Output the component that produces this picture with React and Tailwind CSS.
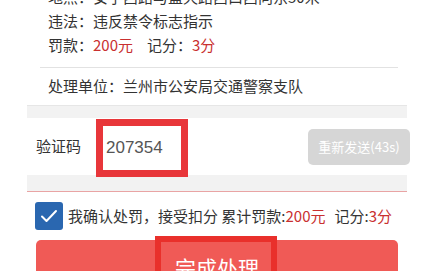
export default function App() {
  return (
    <div
      className="w-[424px] h-[271px] overflow-hidden bg-white text-[#333]"
      style={{ fontFamily: '"Noto Sans CJK SC", "Noto Sans", sans-serif' }}
    >
      {/* 违章信息 */}
      <div className="-mt-[15px] pl-[48px] text-[15px] leading-[24px]">
        <div>地点：安宁西路与蓝天路西口西向东50米</div>
        <div>违法：违反禁令标志指示</div>
        <div>
          罚款：<span className="text-[#c93030]">200元</span>
          <span className="ml-[14px]">记分：</span>
          <span className="text-[#c93030]">3分</span>
        </div>
      </div>
      <div className="mt-[10px] mx-[40px] mr-[26px] h-px bg-[#e2e2e2]" />

      <div className="h-[37px] pl-[48px] flex items-center text-[15px]">
        处理单位：兰州市公安局交通警察支队
      </div>
      <div className="mx-[27px] mr-[17px] h-[13px] bg-[#f2f2f2] border-t border-[#e6e6e6]" />

      {/* 验证码 */}
      <div className="h-[57px] mx-[27px] mr-[17px] flex items-center relative z-10">
        <span className="ml-[9px] w-[60px] text-[15px]">验证码</span>
        <div className="h-[58px] w-[92px] mt-[3px] border-[7px] border-[#e8363a] flex items-center pl-[3px]">
          <span
            className="text-[17px] text-[#555]"
            style={{ fontFamily: '"Liberation Sans", sans-serif' }}
          >
            207354
          </span>
        </div>
        <div className="ml-auto mr-[-3px] w-[102px] h-[36px] rounded-[5px] bg-[#d6d6d6] text-white text-[13px] flex items-center justify-center">
          重新发送(43s)
        </div>
      </div>
      <div className="mx-[27px] mr-[17px] h-[17px] bg-[#f2f2f2] border-b border-[#e9a4a4]" />

      {/* 确认 */}
      <div className="h-[48px] pl-[35px] flex items-center text-[15px]">
        <div className="w-[28px] h-[28px] rounded-[3px] bg-[#2a67b0] flex items-center justify-center">
          <svg width="18" height="14" viewBox="0 0 18 14" fill="none">
            <path d="M2 7.5 L6.5 12 L16 2" stroke="white" strokeWidth="2" strokeLinecap="round" strokeLinejoin="round" />
          </svg>
        </div>
        <span className="ml-[5px]">
          我确认处罚，接受扣分 累计罚款:<span className="text-[#c93030]">200元</span>
          <span className="ml-[9px]">记分:</span>
          <span className="text-[#c93030]">3分</span>
        </span>
      </div>

      {/* 完成处理 */}
      <div className="relative mx-[36px] mr-[26px] h-[54px] rounded-[5px] bg-[#f05a56] flex items-center justify-center">
        <span className="text-white text-[21px] mt-[2px]">完成处理</span>
        <div className="absolute left-[119px] top-[-4px] w-[122px] h-[60px] border-[6px] border-[#e9302b]" />
      </div>
    </div>
  );
}
